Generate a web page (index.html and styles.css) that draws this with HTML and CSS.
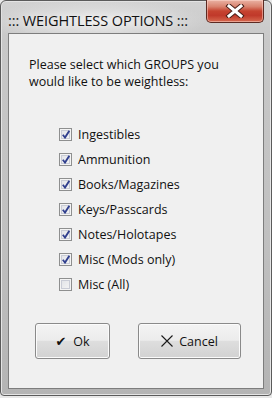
FILE: index.html
```html
<!DOCTYPE html>
<html lang="en">

<head>
    <meta charset="UTF-8">
    <title>Weightless Options</title>
    <link rel="stylesheet" href="styles.css">
</head>

<body>
    <div class="window">
        <div class="titlebar">
            <span class="title">::: WEIGHTLESS OPTIONS :::</span>
            <button class="close-btn" title="Close">
                <svg width="20" height="14" viewBox="0 0 20 14">
                    <path d="M4 2 L16 12 M16 2 L4 12" stroke="#4a2018" stroke-width="5" stroke-linecap="square"/>
                    <path d="M4 2 L16 12 M16 2 L4 12" stroke="#ffffff" stroke-width="3" stroke-linecap="square"/>
                </svg>
            </button>
        </div>

        <div class="client">
            <p class="prompt">Please select which GROUPS you<br>would like to be weightless:</p>

            <ul class="groups">
                <li><span class="box checked"></span>Ingestibles</li>
                <li><span class="box checked"></span>Ammunition</li>
                <li><span class="box checked"></span>Books/Magazines</li>
                <li><span class="box checked"></span>Keys/Passcards</li>
                <li><span class="box checked"></span>Notes/Holotapes</li>
                <li><span class="box checked"></span>Misc (Mods only)</li>
                <li><span class="box"></span>Misc (All)</li>
            </ul>

            <div class="actions">
                <button class="btn btn-ok"><span class="glyph">&#10004;</span>Ok</button>
                <button class="btn btn-cancel">
                    <svg class="x-icon" width="12" height="12" viewBox="0 0 12 12">
                        <path d="M0.5 0.5 L11.5 11.5 M11.5 0.5 L0.5 11.5" stroke="#1a1a1a" stroke-width="1.1"/>
                    </svg>Cancel
                </button>
            </div>
        </div>
    </div>
</body>

</html>
```

FILE: styles.css
```css
body {
    margin: 0;
    background: #e8e8e8;
    font-family: "Open Sans", "Noto Sans", sans-serif;
}

.window {
    width: 270px;
    height: 394px;
    border: 1px solid #5b5b5b;
    border-radius: 6px 6px 4px 4px;
    background: linear-gradient(180deg, #d2d2d2 0%, #c8c8c8 10%, #c0c0c0 60%, #b4b4b4 100%);
    box-shadow: inset 0 0 0 1px #e4e4e4;
    display: flex;
    flex-direction: column;
}

.titlebar {
    height: 32px;
    display: flex;
    align-items: flex-start;
    justify-content: space-between;
    background: radial-gradient(ellipse 110px 22px at 95px 20px, #ececec 0%, #dadada 55%, rgba(210, 210, 210, 0) 100%);
}

.title {
    flex-shrink: 0;
    white-space: nowrap;
    margin: 10px 0 0 7px;
    font-family: "Open Sans", sans-serif;
    font-size: 14.5px;
    color: #111;
    letter-spacing: -0.1px;
    text-shadow: 0 0 8px #fff;
}

.close-btn {
    flex-shrink: 0;
    width: 58px;
    height: 23px;
    margin: -1px 7px 0 0;
    border: 1px solid #5c2a22;
    border-top: none;
    border-radius: 0 0 5px 5px;
    background: linear-gradient(180deg, #eab3a4 0%, #d9836f 30%, #c64330 50%, #c0392a 70%, #d76a50 100%);
    box-shadow: inset 0 0 0 1px rgba(255, 220, 210, 0.5);
    display: flex;
    align-items: center;
    justify-content: center;
    padding: 0;
}

.client {
    margin: 0 7px;
    height: 354px;
    border: 1px solid #7d7d7d;
    background: #f0f0f0;
    font-size: 12.5px;
    color: #111;
}

.prompt {
    margin: 0;
    padding: 22px 0 0 20px;
    line-height: 17px;
}

.groups {
    list-style: none;
    margin: 32px 0 0 0;
    padding: 0 0 0 50px;
}

.groups li {
    height: 25px;
    display: flex;
    align-items: center;
}

.box {
    width: 11px;
    height: 11px;
    margin-right: 6px;
    border: 1px solid #8e8f8f;
    box-shadow: inset 0 0 0 1px #f4f4f4, inset 0 0 0 2px #c9ccd6;
    background: linear-gradient(135deg, #dfe1e6 0%, #f6f6f6 100%);
    position: relative;
}

.box.checked::after {
    content: "";
    position: absolute;
    left: 2px;
    top: 1px;
    width: 8px;
    height: 9px;
    background: no-repeat center / contain url("data:image/svg+xml;utf8,<svg xmlns='http://www.w3.org/2000/svg' viewBox='0 0 8 9'><path d='M0.8 4.8 L3 7.6 L7.3 0.8' fill='none' stroke='%23303f8e' stroke-width='1.8'/></svg>");
}

.actions {
    display: flex;
    gap: 28px;
    padding: 26px 0 0 26px;
}

.btn {
    height: 36px;
    border: 1px solid #8a8a8a;
    border-radius: 3px;
    background: linear-gradient(180deg, #f3f3f3 0%, #ececec 48%, #dedede 50%, #d2d2d2 100%);
    box-shadow: inset 0 0 0 1px #fbfbfb;
    font-family: "Open Sans", sans-serif;
    font-size: 12.5px;
    color: #111;
    display: flex;
    align-items: center;
    justify-content: center;
    padding: 0;
}

.btn-ok {
    width: 75px;
}

.btn-cancel {
    width: 103px;
}

.glyph {
    font-family: "DejaVu Sans", sans-serif;
    font-size: 13px;
    margin-right: 7px;
}

.x-icon {
    margin-right: 6px;
}
```
